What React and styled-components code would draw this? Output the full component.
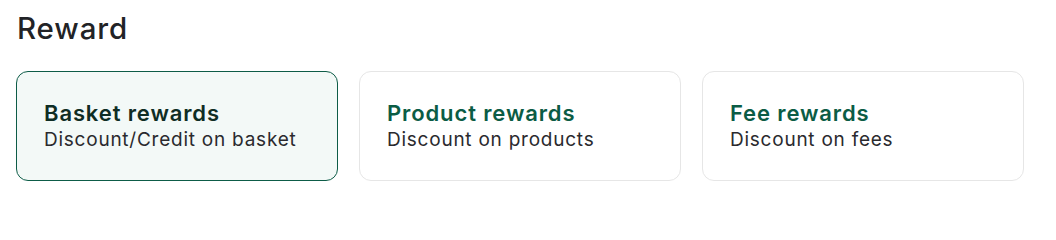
import React, { useState } from "react";
import styled, { createGlobalStyle } from "styled-components";

const GlobalStyle = createGlobalStyle`
    body {
        margin: 0;
        background: #ffffff;
        font-family: Inter, "Noto Sans", sans-serif;
        -webkit-font-smoothing: antialiased;
    }
`;

const rewards = [
    { id: "basket", title: "Basket rewards", description: "Discount/Credit on basket" },
    { id: "product", title: "Product rewards", description: "Discount on products" },
    { id: "fee", title: "Fee rewards", description: "Discount on fees" },
];

function App() {
    const [selected, setSelected] = useState("basket");

    return (
        <>
            <GlobalStyle />
            <Section>
                <Heading>Reward</Heading>
                <CardRow>
                    {rewards.map((reward) => (
                        <Card
                            key={reward.id}
                            type="button"
                            $active={selected === reward.id}
                            onClick={() => setSelected(reward.id)}
                        >
                            <CardTitle $active={selected === reward.id}>{reward.title}</CardTitle>
                            <CardText>{reward.description}</CardText>
                        </Card>
                    ))}
                </CardRow>
            </Section>
        </>
    );
}

const Section = styled.div`
    padding: 10px 16px 0 16px;
    display: flex;
    flex-direction: column;
`;

const Heading = styled.h2`
    margin: 0 0 0 1px;
    font-size: 29.5px;
    line-height: 36px;
    font-weight: 500;
    letter-spacing: 0.03em;
    color: #222326;
`;

const CardRow = styled.div`
    display: grid;
    grid-template-columns: repeat(3, 322px);
    gap: 21px;
    margin-top: 25px;
`;

const Card = styled.button`
    height: 110px;
    box-sizing: border-box;
    display: flex;
    flex-direction: column;
    justify-content: center;
    align-items: flex-start;
    padding: 0 27px;
    border-radius: 12px;
    border: 1px solid ${({ $active }) => ($active ? "#0d5c47" : "#e6e6e6")};
    background: ${({ $active }) => ($active ? "#f3f9f7" : "#ffffff")};
    font-family: inherit;
    text-align: left;
    cursor: pointer;
`;

const CardTitle = styled.span`
    font-size: 22px;
    line-height: 28px;
    font-weight: 600;
    letter-spacing: 0.04em;
    color: ${({ $active }) => ($active ? "#0f2d24" : "#0b5c45")};
`;

const CardText = styled.span`
    font-size: 19px;
    line-height: 26px;
    letter-spacing: 0.04em;
    color: #2a2a2e;
`;

export default App;
